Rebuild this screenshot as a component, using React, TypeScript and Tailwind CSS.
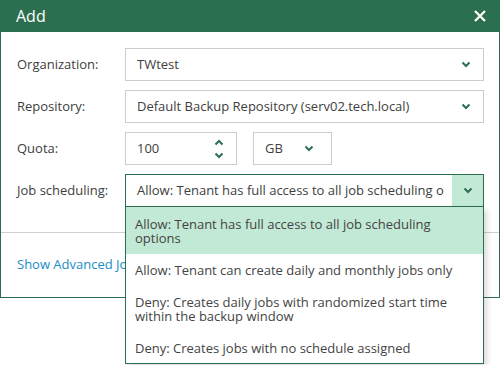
import React from "react";

const Chevron = ({ className = "" }: { className?: string }) => (
  <svg width="10" height="7" viewBox="0 0 10 7" className={className}>
    <path d="M1.5 1.5 L5 5 L8.5 1.5" fill="none" stroke="#2c6e50" strokeWidth="2" />
  </svg>
);

const ChevronUp = () => (
  <svg width="10" height="7" viewBox="0 0 10 7">
    <path d="M1.5 5.5 L5 2 L8.5 5.5" fill="none" stroke="#2c6e50" strokeWidth="2" />
  </svg>
);

export default function App() {
  const font = { fontFamily: '"Open Sans", "Noto Sans", sans-serif' };
  return (
    <div className="w-[500px] h-[365px] bg-white relative text-[13px] text-[#404040]" style={font}>
      <div className="w-[500px] h-[298px] border border-t-0 border-[#2c6e50] flex flex-col">
        <div className="h-[32px] bg-[#2c6e50] flex items-center justify-between pl-[15px] pr-[12px]">
          <span className="text-white text-[16px]">Add</span>
          <svg width="14" height="14" viewBox="0 0 14 14">
            <path d="M2 2 L12 12 M12 2 L2 12" stroke="white" strokeWidth="2.2" />
          </svg>
        </div>
        <div className="flex flex-col gap-[9px] pt-[16px] pl-[16px] pr-[15px]">
          <div className="flex items-center h-[33px]">
            <div className="w-[108px]">Organization:</div>
            <div className="flex-1 h-[33px] border border-[#cccccc] flex items-center justify-between pl-[11px] pr-[12px]">
              <span>TWtest</span>
              <Chevron />
            </div>
          </div>
          <div className="flex items-center h-[33px]">
            <div className="w-[108px]">Repository:</div>
            <div className="flex-1 h-[33px] border border-[#cccccc] flex items-center justify-between pl-[11px] pr-[12px]">
              <span>Default Backup Repository (serv02.tech.local)</span>
              <Chevron />
            </div>
          </div>
          <div className="flex items-center h-[33px]">
            <div className="w-[108px]">Quota:</div>
            <div className="w-[112px] h-[33px] border border-[#cccccc] flex items-center justify-between pl-[11px] pr-[12px]">
              <span>100</span>
              <div className="flex flex-col gap-[6px]">
                <ChevronUp />
                <Chevron />
              </div>
            </div>
            <div className="w-[79px] h-[33px] ml-[16px] border border-[#cccccc] flex items-center justify-between pl-[11px] pr-[17px]">
              <span>GB</span>
              <Chevron />
            </div>
          </div>
          <div className="flex items-center h-[33px]">
            <div className="w-[108px]">Job scheduling:</div>
            <div className="flex-1 h-[33px] border border-[#2c6e50] flex items-stretch">
              <div className="flex-1 flex items-center pl-[11px] overflow-hidden whitespace-nowrap">
                Allow: Tenant has full access to all job scheduling o
              </div>
              <div className="w-[31px] bg-[#c2e8d6] flex items-center justify-center">
                <Chevron />
              </div>
            </div>
          </div>
        </div>
        <div className="mt-[25px] border-t border-[#cfcfcf]" />
        <div className="flex-1 flex items-center pl-[16px] text-[#1a8bc7]">Show Advanced Job Scheduling Settings</div>
      </div>
      <div className="absolute left-[125px] top-[207px] w-[359px] bg-white border border-t-0 border-[#2c6e50] shadow-[3px_3px_6px_rgba(0,0,0,0.15)] leading-[14px] text-[#444]">
        <div className="bg-[#c2e8d6] px-[9px] pt-[10px] pb-[9px]">
          Allow: Tenant has full access to all job scheduling options
        </div>
        <div className="px-[9px] pt-[9px] pb-[9px]">Allow: Tenant can create daily and monthly jobs only</div>
        <div className="px-[9px] pt-[9px] pb-[9px]">
          Deny: Creates daily jobs with randomized start time within the backup window
        </div>
        <div className="px-[9px] pt-[9px] pb-[8px]">Deny: Creates jobs with no schedule assigned</div>
      </div>
    </div>
  );
}
